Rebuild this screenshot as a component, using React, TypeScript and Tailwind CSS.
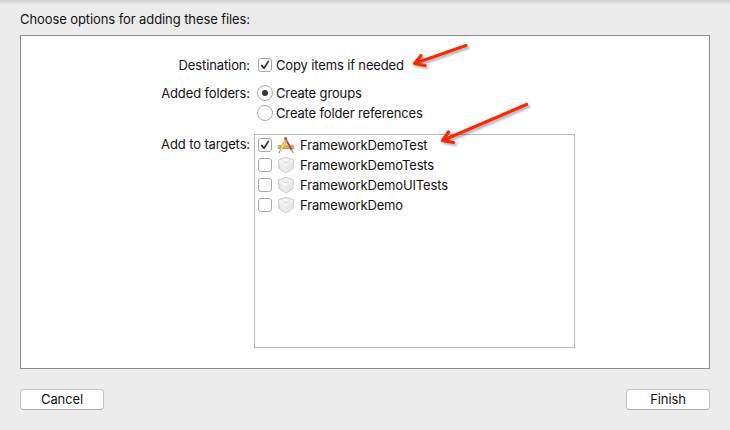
import React from "react";

function Check({ checked }: { checked?: boolean }) {
  return (
    <span className="block h-[14px] w-[14px] shrink-0 rounded-[3px] border border-[#a9a9a9] bg-white">
      {checked && (
        <svg viewBox="0 0 12 12" className="block h-3 w-3">
          <path d="M2.6 6.6 L5 9.2 L9.4 2.4" fill="none" stroke="#333" strokeWidth="1.7" strokeLinecap="round" strokeLinejoin="round" />
        </svg>
      )}
    </span>
  );
}

function Radio({ checked }: { checked?: boolean }) {
  return (
    <span className="flex h-4 w-4 shrink-0 items-center justify-center rounded-full border border-[#a9a9a9] bg-white">
      {checked && <span className="h-1.5 w-1.5 rounded-full bg-[#333]" />}
    </span>
  );
}

function AppIcon() {
  return (
    <svg viewBox="0 0 18 18" className="block h-[18px] w-[18px] shrink-0">
      <path d="M.8 9h16.400v4H.8z" fill="#e3a874" />
      <path d="M.8 12.200h16.400v.8H.8z" fill="#c98a58" />
      <path d="M8 2 L14.800 14" stroke="#b0503a" strokeWidth="2" />
      <path d="M7 1.800 L9.400 1 L10.400 3 L8 4z" fill="#9a5a48" />
      <path d="M14.700 13.800 L16.300 17" stroke="#999" strokeWidth="1.300" />
      <path d="M8.800 5 L4 13.300" stroke="#b09030" strokeWidth="3" />
      <path d="M8.800 5 L4 13.300" stroke="#fadc3c" strokeWidth="2" />
      <path d="M8 4.200 L9.800 5.200" stroke="#d58a74" strokeWidth="1.600" />
      <path d="M2.800 12.700 L5.200 14 L2.200 16.800z" fill="#d6b68b" />
      <path d="M2.400 15.300 L2.100 17" stroke="#666" strokeWidth=".9" />
    </svg>
  );
}

function BlockIcon() {
  return (
    <svg viewBox="0 0 18 18" className="block h-[18px] w-[18px] shrink-0">
      <path d="M9 1.300 L16.500 4 L15.900 12.400 L9 17.100 L2.100 12.400 L1.500 4z" fill="#ededed" stroke="#c6c6c6" strokeWidth="1" strokeLinejoin="round" />
      <path d="M9 1.900 L15.800 4.500 L9 9.800 L2.200 4.500z" fill="#f3f3f3" />
      <path d="M9 9.800 L15.800 4.700 L15.300 12.100 L9 16.400z" fill="#e8e8e8" />
      <path d="M2.400 4.700 L9 9.800 L15.600 4.700" fill="none" stroke="#fcfcfc" strokeWidth=".9" />
      <path d="M6.200 4.800 H11.800 V6.200 Q9 8.400 6.200 6.200z" fill="#d8d8d8" />
      <ellipse cx="9" cy="4.700" rx="2.700" ry="1.200" fill="#f5f5f5" />
    </svg>
  );
}

const targets = [
  { name: "FrameworkDemoTest", app: true },
  { name: "FrameworkDemoTests" },
  { name: "FrameworkDemoUITests" },
  { name: "FrameworkDemo" },
];

function Label({ children }: { children: React.ReactNode }) {
  return <div className="w-[250px] shrink-0 pr-[21px] text-right tracking-[-0.12px]">{children}</div>;
}

export default function App() {
  return (
    <div className="relative flex h-[430px] w-[730px] flex-col overflow-hidden bg-[#ececec] px-5 font-['Inter','Liberation_Sans',sans-serif] text-[13px] leading-5 tracking-[-0.14px] whitespace-nowrap text-[#111]">
      <div className="-mx-5 h-[5px] shrink-0 bg-linear-to-b from-[#cecece] to-[#ececec]" />
      <h1 className="mt-1 h-[26px] shrink-0 font-normal tracking-[-0.09px]">Choose options for adding these files:</h1>
      <main className="h-[334px] w-[690px] shrink-0 border border-[#8c8c8c] bg-white pt-[19px]">
        <div className="flex h-5 items-center">
          <Label>Destination:</Label>
          <div className="-ml-[13px] flex items-center gap-1">
            <Check checked />
            <span>Copy items if needed</span>
          </div>
        </div>
        <div className="mt-2 flex">
          <Label>Added folders:</Label>
          <div className="-ml-[14px]">
            <div className="flex h-5 items-center gap-[3px]"><Radio checked /><span>Create groups</span></div>
            <div className="flex h-5 items-center gap-[3px]"><Radio /><span>Create folder references</span></div>
          </div>
        </div>
        <div className="mt-[11px] flex">
          <Label>Add to targets:</Label>
          <div className="-ml-[17px] h-[214px] w-[321px] border border-[#b9b9b9]">
            {targets.map((t) => (
              <div key={t.name} className="flex h-5 items-center pl-[3px]">
                <Check checked={t.app} />
                <span className="mr-[5px] ml-[5px]">{t.app ? <AppIcon /> : <BlockIcon />}</span>
                <span>{t.name}</span>
              </div>
            ))}
          </div>
        </div>
      </main>
      <footer className="mt-[20px] flex justify-between">
        {["Cancel", "Finish"].map((name) => (
          <button key={name} className="h-[21px] w-[84px] rounded-[4px] border border-[#c4c4c4] border-b-[#acacac] bg-white leading-[19px]">{name}</button>
        ))}
      </footer>
      <svg viewBox="0 0 730 430" className="pointer-events-none absolute inset-0 h-full w-full drop-shadow-[2px_2px_1px_rgba(0,0,0,0.3)]">
        <g fill="none" stroke="#ff2600" strokeWidth="3.2" strokeLinecap="round" strokeLinejoin="round">
          <path d="M466 45.500 L414.500 63.500 M421 55.500 L414.500 63.500 L425 65.500" />
          <path d="M526.500 104.500 L442.500 140.500 M448.500 132 L442.500 140.500 L453.500 142.500" />
        </g>
      </svg>
    </div>
  );
}
